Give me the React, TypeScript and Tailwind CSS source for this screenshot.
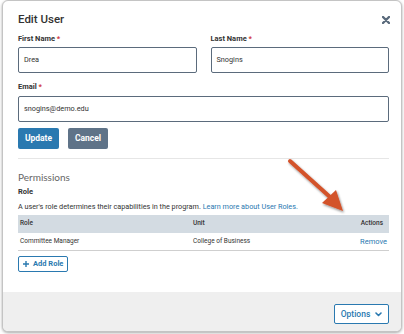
import React from 'react';

const Req = () => <span className="text-[#d0343a]"> *</span>;

export default function App() {
  return (
    <div className="relative w-[404px] h-[334px] bg-white overflow-hidden font-['Roboto',sans-serif] text-[#333]">
      <div className="ml-[2px] w-[400px] h-[332px] border border-[#c4c4c4] rounded-[6px] shadow-[0_1px_3px_rgba(0,0,0,0.35)] flex flex-col overflow-hidden bg-white">
        <div className="flex-1 pl-[15px] pr-[12px] pt-[10px]">
          {/* Header */}
          <div className="flex justify-between items-center h-[16px]">
            <h2 className="text-[11.5px] font-medium text-[#333] leading-[16px]">Edit User</h2>
            <svg width="8" height="8" viewBox="0 0 8 8" className="mr-[-1px] mt-[1px]">
              <path d="M1 1 L7 7 M7 1 L1 7" stroke="#5b6b7c" strokeWidth="2.4" strokeLinecap="round" />
            </svg>
          </div>

          {/* Name fields */}
          <div className="flex gap-[14px] mt-[6px]">
            <div className="flex-1">
              <label className="block text-[7.5px] font-bold leading-[12px] text-[#333]">First Name<Req /></label>
              <div className="mt-[2px] h-[26px] border-[1.5px] border-[#5b6b7c] rounded-[2px] flex items-center pl-[5px] text-[7.3px] text-[#333]">Drea</div>
            </div>
            <div className="flex-1">
              <label className="block text-[7.5px] font-bold leading-[12px] text-[#333]">Last Name<Req /></label>
              <div className="mt-[2px] h-[26px] border-[1.5px] border-[#5b6b7c] rounded-[2px] flex items-center pl-[5px] text-[7.3px] text-[#333]">Snogins</div>
            </div>
          </div>

          {/* Email */}
          <label className="block mt-[8px] text-[7.5px] font-bold leading-[12px] text-[#333]">Email<Req /></label>
          <div className="mt-[3px] h-[26px] border-[1.5px] border-[#5b6b7c] rounded-[2px] flex items-center pl-[5px] text-[7.3px] text-[#333]">snogins@demo.edu</div>

          {/* Buttons */}
          <div className="flex gap-[9px] mt-[6px]">
            <button className="w-[41px] h-[21px] bg-[#2a79b0] rounded-[2px] text-white text-[8.5px] font-bold">Update</button>
            <button className="w-[40px] h-[21px] bg-[#5f7388] rounded-[2px] text-white text-[8.5px] font-bold">Cancel</button>
          </div>

          <div className="mt-[9px] h-px bg-[#e6e6e6]" />

          {/* Permissions */}
          <h3 className="mt-[11px] font-['Lato',sans-serif] text-[10px] leading-[14px] text-[#666]">Permissions</h3>
          <div className="mt-[2px] text-[7.5px] font-bold leading-[12px] text-[#333]">Role</div>
          <p className="mt-[3px] text-[7.25px] leading-[12px] text-[#333]">
            A user's role determines their capabilities in the program.{' '}
            <span className="text-[#2a79b0]">Learn more about User Roles.</span>
          </p>

          {/* Table */}
          <div className="mt-[2px] text-[6.5px]">
            <div className="h-[18px] bg-[#d3dbe2] flex items-center pl-[2px] pr-[6px] font-medium text-[#333]">
              <span className="w-[173px]">Role</span>
              <span className="flex-1">Unit</span>
              <span>Actions</span>
            </div>
            <div className="h-[18px] border-b border-[#cfcfcf] flex items-center pl-[2px] pr-[2px] text-[#333]">
              <span className="w-[173px]">Committee Manager</span>
              <span className="flex-1">College of Business</span>
              <span className="text-[#2a79b0] text-[7.5px]">Remove</span>
            </div>
          </div>

          <button className="mt-[5px] h-[16px] px-[4px] border-[1.5px] border-[#2a79b0] rounded-[2px] flex items-center gap-[4px] text-[#2a79b0] text-[7.5px] font-bold">
            <svg width="6" height="6" viewBox="0 0 6 6">
              <path d="M3 0 V6 M0 3 H6" stroke="#2a79b0" strokeWidth="1.4" />
            </svg>
            Add Role
          </button>
        </div>

        {/* Footer */}
        <div className="h-[39px] bg-[#efefef] flex justify-end items-start pt-[12px] pr-[12px]">
          <button className="w-[55px] h-[20px] border-[1.5px] border-[#2a79b0] rounded-[2px] bg-white flex items-center justify-center gap-[5px] text-[#2a79b0] text-[8.5px] font-medium">
            Options
            <svg width="7" height="5" viewBox="0 0 7 5">
              <path d="M1 1 L3.5 3.5 L6 1" stroke="#2a79b0" strokeWidth="1.6" fill="none" strokeLinecap="round" strokeLinejoin="round" />
            </svg>
          </button>
        </div>
      </div>

      {/* Annotation arrow */}
      <svg className="absolute left-0 top-0 pointer-events-none" width="404" height="334" viewBox="0 0 404 334">
        <defs>
          <filter id="sh" x="-20%" y="-20%" width="140%" height="140%">
            <feDropShadow dx="1" dy="1.5" stdDeviation="1.2" floodColor="#000" floodOpacity="0.45" />
          </filter>
        </defs>
        <g filter="url(#sh)">
          <line x1="290" y1="161" x2="330" y2="197" stroke="#d3522b" strokeWidth="4" strokeLinecap="round" />
          <polygon points="343,211 322,203 336,190" fill="#d3522b" />
        </g>
      </svg>
    </div>
  );
}
